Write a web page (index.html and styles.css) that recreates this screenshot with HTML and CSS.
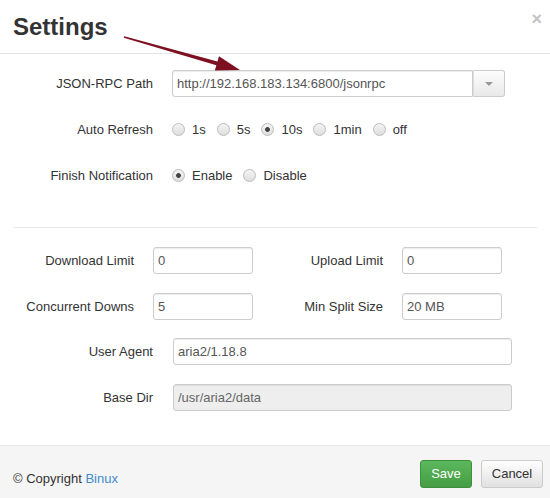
FILE: index.html
```html
<!DOCTYPE html>
<html>
<head>
<meta charset="utf-8">
<title>Settings</title>
<link rel="stylesheet" href="styles.css">
</head>
<body>
<div class="modal">
  <svg class="arrow" width="550" height="100" viewBox="0 0 550 100">
    <polygon points="124.22,36.23 217.45,61.5 218.95,56.2 240,70 214.85,70.6 216.35,65.3 123.78,37.77" fill="#7d1020"/>
  </svg>
  <div class="modal-header">
    <h3 class="title">Settings</h3>
    <span class="close">×</span>
  </div>
  <div class="modal-body">
    <div class="form-top">
      <label class="lbl">JSON-RPC Path</label>
      <div class="input-group">
        <input class="input input-left" type="text" value="http://192.168.183.134:6800/jsonrpc">
        <span class="dd-btn"><span class="caret"></span></span>
      </div>

      <label class="lbl">Auto Refresh</label>
      <div class="radios">
        <label class="opt"><input type="radio" name="r"><span>1s</span></label>
        <label class="opt"><input type="radio" name="r"><span>5s</span></label>
        <label class="opt"><input type="radio" name="r" checked><span>10s</span></label>
        <label class="opt"><input type="radio" name="r"><span>1min</span></label>
        <label class="opt"><input type="radio" name="r"><span>off</span></label>
      </div>

      <label class="lbl">Finish Notification</label>
      <div class="radios">
        <label class="opt"><input type="radio" name="n" checked><span>Enable</span></label>
        <label class="opt"><input type="radio" name="n"><span>Disable</span></label>
      </div>
    </div>

    <hr class="sep">

    <div class="form-pairs">
      <label class="lbl">Download Limit</label>
      <input class="input" type="text" value="0">
      <label class="lbl">Upload Limit</label>
      <input class="input" type="text" value="0">

      <label class="lbl">Concurrent Downs</label>
      <input class="input" type="text" value="5">
      <label class="lbl">Min Split Size</label>
      <input class="input" type="text" value="20 MB">
    </div>

    <div class="form-wide">
      <label class="lbl">User Agent</label>
      <input class="input" type="text" value="aria2/1.18.8">

      <label class="lbl">Base Dir</label>
      <input class="input input-disabled" type="text" value="/usr/aria2/data" disabled>
    </div>
  </div>
  <div class="modal-footer">
    <div class="copyright">© Copyright <a class="link" href="#">Binux</a></div>
    <div class="buttons">
      <button class="btn btn-save">Save</button>
      <button class="btn btn-cancel">Cancel</button>
    </div>
  </div>
</div>
</body>
</html>
```

FILE: styles.css
```css
html, body {
  margin: 0;
  padding: 0;
  background: #fff;
}

body {
  font-family: "Liberation Sans", Arial, Helvetica, sans-serif;
  font-size: 13px;
  color: #333;
  overflow: hidden;
}

.modal {
  position: relative;
  width: 550px;
  height: 498px;
  display: flex;
  flex-direction: column;
  background: #fff;
}

.arrow {
  position: absolute;
  left: 0;
  top: 0;
  pointer-events: none;
  z-index: 5;
}

.modal-header {
  display: flex;
  justify-content: space-between;
  align-items: flex-start;
  padding: 14px 8px 13px 13px;
  border-bottom: 1px solid #e5e5e5;
}

.title {
  margin: 0;
  font-size: 24px;
  line-height: 26px;
  font-weight: bold;
  color: #333;
}

.close {
  margin-top: -5px;
  font-size: 18px;
  line-height: 20px;
  font-weight: bold;
  color: #c4c4c4;
}

.modal-body {
  padding: 16px 0 34px 0;
}

.lbl {
  text-align: right;
  color: #333;
  font-size: 13px;
  line-height: 27px;
  white-space: nowrap;
}

.form-top {
  display: grid;
  grid-template-columns: 153px 333px;
  grid-auto-rows: 27px;
  column-gap: 19px;
  row-gap: 19px;
  align-items: center;
}

.input-group {
  display: flex;
  height: 27px;
}

.input {
  box-sizing: border-box;
  height: 27px;
  margin: 0;
  padding: 0 4px;
  border: 1px solid #ccc;
  border-radius: 3px;
  background: #fff;
  font-family: "Liberation Sans", Arial, Helvetica, sans-serif;
  font-size: 13px;
  color: #555;
  box-shadow: inset 0 1px 1px rgba(0, 0, 0, 0.075);
  outline: none;
  width: 100%;
}

.input-left {
  flex: 1;
  border-radius: 3px 0 0 3px;
}

.input-disabled {
  background: #eee;
  color: #666;
}

.dd-btn {
  box-sizing: border-box;
  width: 32px;
  height: 27px;
  display: flex;
  align-items: center;
  justify-content: center;
  border: 1px solid #ccc;
  border-left: 1px solid #ddd;
  border-radius: 0 3px 3px 0;
  background: linear-gradient(#fdfdfd, #e9e9e9);
}

.caret {
  width: 0;
  height: 0;
  border-top: 4px solid #999;
  border-left: 4px solid transparent;
  border-right: 4px solid transparent;
}

.radios {
  display: flex;
  align-items: center;
  gap: 11px;
  height: 27px;
}

.opt {
  display: inline-flex;
  align-items: center;
  color: #333;
  font-size: 13px;
}

.opt input {
  appearance: none;
  -webkit-appearance: none;
  box-sizing: border-box;
  width: 13px;
  height: 13px;
  margin: 0 7px 0 0;
  border: 1px solid #bbb;
  border-radius: 50%;
  background: linear-gradient(#f4f4f4, #dedede);
}

.opt input:checked {
  background: radial-gradient(circle, #444 0, #444 2px, rgba(68, 68, 68, 0) 2.8px), linear-gradient(#f4f4f4, #dedede);
}

.sep {
  margin: 38px 13px 19px 13px;
  border: 0;
  border-top: 1px solid #e8e8e8;
  height: 0;
}

.form-pairs {
  display: grid;
  grid-template-columns: 134px 100px 111px 100px;
  grid-auto-rows: 27px;
  column-gap: 19px;
  row-gap: 19px;
  align-items: center;
}

.form-wide {
  margin-top: 18px;
  display: grid;
  grid-template-columns: 153px 339px;
  grid-auto-rows: 27px;
  column-gap: 20px;
  row-gap: 19px;
  align-items: center;
}

.modal-footer {
  flex: 1;
  display: flex;
  justify-content: space-between;
  align-items: flex-start;
  padding: 14px 7px 0 13px;
  border-top: 1px solid #e5e5e5;
  background: #f5f5f5;
}

.copyright {
  margin-top: 9px;
  line-height: 20px;
  color: #333;
}

.link {
  color: #428bca;
  text-decoration: none;
}

.buttons {
  display: flex;
  gap: 9px;
}

.btn {
  box-sizing: border-box;
  height: 28px;
  padding: 0;
  border-radius: 3px;
  font-family: "Liberation Sans", Arial, Helvetica, sans-serif;
  font-size: 13px;
  line-height: 26px;
  text-align: center;
  cursor: pointer;
}

.btn-save {
  width: 52px;
  color: #fff;
  border: 1px solid #3e8f3e;
  background: linear-gradient(#5cb85c, #449d44);
}

.btn-cancel {
  width: 62px;
  color: #333;
  border: 1px solid #ccc;
  background: linear-gradient(#fff, #e0e0e0);
}
```
